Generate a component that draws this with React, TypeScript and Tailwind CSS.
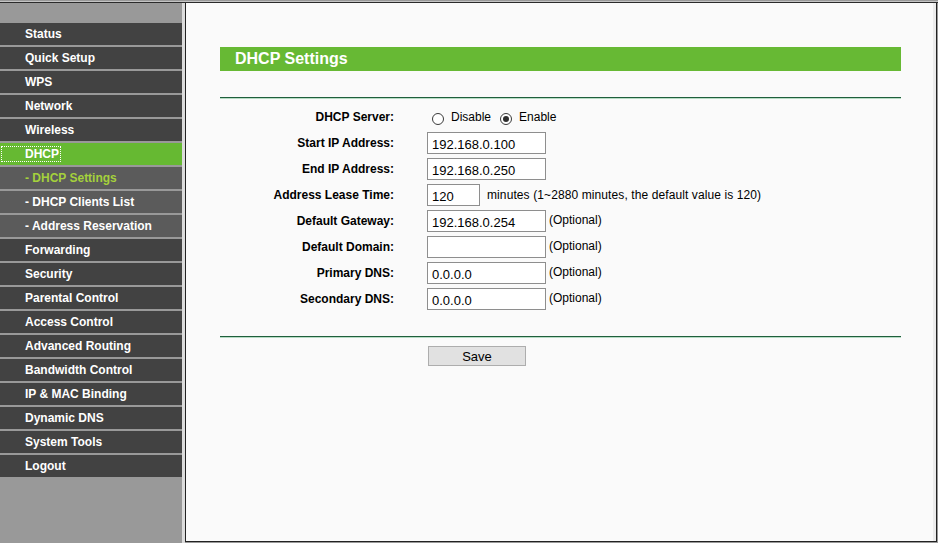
import React from 'react'

type MenuItem = { label: string; sub?: boolean; open?: boolean; current?: boolean }

const MENU: MenuItem[] = [
  { label: 'Status' },
  { label: 'Quick Setup' },
  { label: 'WPS' },
  { label: 'Network' },
  { label: 'Wireless' },
  { label: 'DHCP', open: true },
  { label: '- DHCP Settings', sub: true, current: true },
  { label: '- DHCP Clients List', sub: true },
  { label: '- Address Reservation', sub: true },
  { label: 'Forwarding' },
  { label: 'Security' },
  { label: 'Parental Control' },
  { label: 'Access Control' },
  { label: 'Advanced Routing' },
  { label: 'Bandwidth Control' },
  { label: 'IP & MAC Binding' },
  { label: 'Dynamic DNS' },
  { label: 'System Tools' },
  { label: 'Logout' },
]

function Sidebar() {
  return (
    <aside className="w-[182px] pt-[20px] flex flex-col gap-[2px]">
      {MENU.map(item => {
        if (item.open) {
          return (
            <div key={item.label} className="h-[22px] bg-[#66b932] flex items-center">
              <span className="ml-[1px] h-[16px] pl-[23px] pr-[1px] border border-dotted border-white flex items-center text-[12px] font-bold text-white">
                {item.label}
              </span>
            </div>
          )
        }
        return (
          <div
            key={item.label}
            className={
              item.sub
                ? 'h-[22px] bg-[#5b5b5b] flex items-center pl-[25px] text-[12px] font-bold'
                : 'h-[22px] bg-[#424242] flex items-center pl-[25px] text-[12px] font-bold'
            }
          >
            <span className={item.current ? 'text-[#a5d13c]' : 'text-white'}>{item.label}</span>
          </div>
        )
      })}
    </aside>
  )
}

function Radio({ checked }: { checked?: boolean }) {
  return (
    <span className="mt-[3px] w-[12px] h-[12px] rounded-full border border-[#3a3a3a] bg-white flex items-center justify-center shrink-0">
      {checked && <span className="w-[6px] h-[6px] rounded-full bg-[#2e2e2e]" />}
    </span>
  )
}

function TextBox({ value, w = 'w-[119px]' }: { value: string; w?: string }) {
  return (
    <input
      readOnly
      value={value}
      className={`${w} h-[22px] border border-[#8e8e8e] bg-white pl-[4px] pt-[2px] text-[13px] text-black outline-none`}
    />
  )
}

function Row({ label, children }: { label: string; children: React.ReactNode }) {
  return (
    <div className="h-[26px] grid grid-cols-[174px_1fr] gap-x-[33px] items-center">
      <div className="text-right text-[12px] font-bold text-black">{label}</div>
      <div className="flex items-center">{children}</div>
    </div>
  )
}

function Optional() {
  return <span className="ml-[3px] mb-[2px] text-[12px] text-black">(Optional)</span>
}

function Divider() {
  return (
    <div className="border-t border-[#1f5f3c]">
      <div className="h-[1px] bg-[#b6dcc4]" />
    </div>
  )
}

export default function App() {
  return (
    <div className="w-[938px] h-[543px] bg-[#999999] pt-[1px] flex flex-col font-['Liberation_Sans',Arial,sans-serif] overflow-hidden">
      <div className="h-[1px] bg-[#c4c4c4]" />
      <div className="flex flex-1 border-t border-[#2b2b2b]">
        <Sidebar />
        <div className="w-[3px] bg-[#dcdcdc]" />
        <main className="flex-1 mr-[1px] mb-[1px] bg-[#fafafa] border-l border-r border-b border-[#222222] flex">
          <div className="flex-1">
            <div className="ml-[34px] mt-[44px] w-[681px]">
              <div className="h-[24px] bg-[#67b934] pl-[15px] flex items-center text-[16px] font-bold text-white">
                DHCP Settings
              </div>

              <div className="mt-[26px]">
                <Divider />
              </div>

              <div className="pt-[5px]">
                <Row label="DHCP Server:">
                  <span className="ml-[5px]">
                    <Radio />
                  </span>
                  <span className="ml-[7px] text-[12px] text-black">Disable</span>
                  <span className="ml-[9px]">
                    <Radio checked />
                  </span>
                  <span className="ml-[7px] text-[12px] text-black">Enable</span>
                </Row>
                <Row label="Start IP Address:">
                  <TextBox value="192.168.0.100" />
                </Row>
                <Row label="End IP Address:">
                  <TextBox value="192.168.0.250" />
                </Row>
                <Row label="Address Lease Time:">
                  <TextBox value="120" w="w-[53px]" />
                  <span className="ml-[7px] text-[12px] text-black tracking-[0.1px]">
                    minutes (1~2880 minutes, the default value is 120)
                  </span>
                </Row>
                <Row label="Default Gateway:">
                  <TextBox value="192.168.0.254" />
                  <Optional />
                </Row>
                <Row label="Default Domain:">
                  <TextBox value="" />
                  <Optional />
                </Row>
                <Row label="Primary DNS:">
                  <TextBox value="0.0.0.0" />
                  <Optional />
                </Row>
                <Row label="Secondary DNS:">
                  <TextBox value="0.0.0.0" />
                  <Optional />
                </Row>
              </div>

              <div className="mt-[24px]">
                <Divider />
              </div>

              <div className="mt-[8px] pl-[208px] flex">
                <button className="w-[98px] h-[20px] bg-[#e1e1e1] border border-[#adadad] text-[13px] text-black leading-none">
                  Save
                </button>
              </div>
            </div>
          </div>
          <div className="w-[3px] bg-[#ececec]" />
        </main>
      </div>
    </div>
  )
}
